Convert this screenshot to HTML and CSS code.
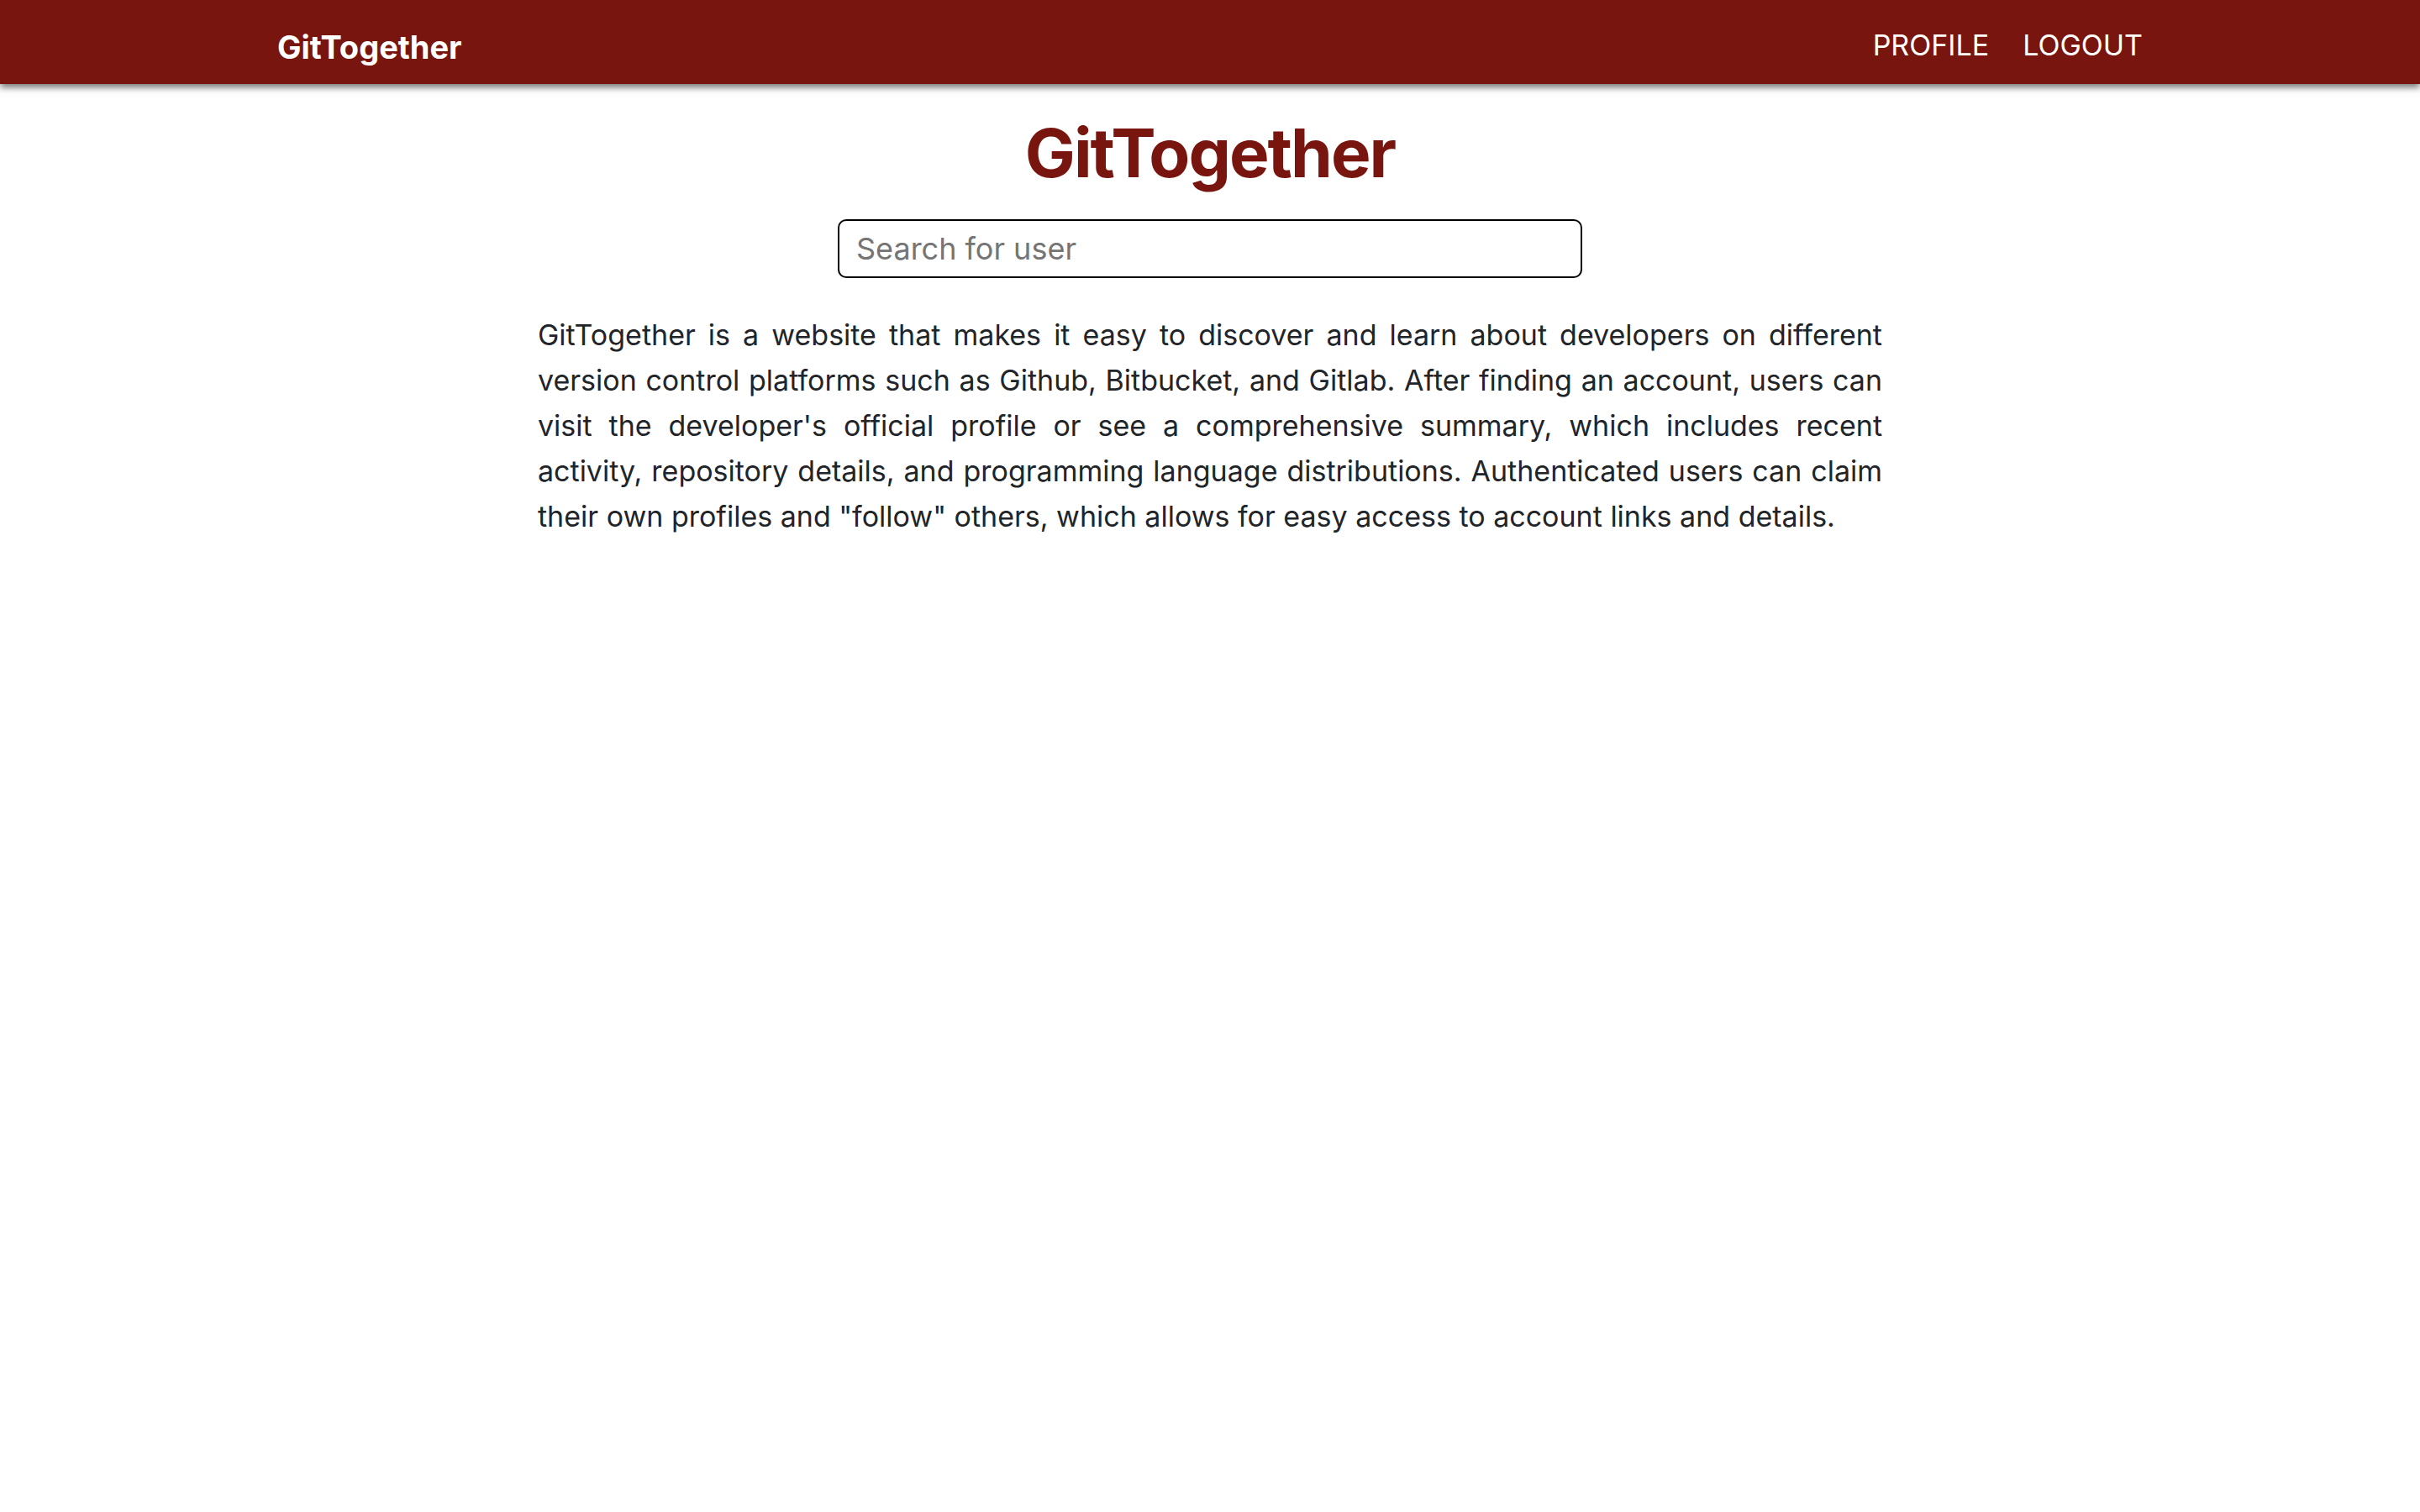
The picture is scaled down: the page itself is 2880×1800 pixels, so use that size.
FILE: index.html
```html
<!DOCTYPE html>
<html lang="en">
<head>
<meta charset="utf-8">
<title>GitTogether</title>
<link rel="stylesheet" href="styles.css">
</head>
<body>
<nav class="navbar">
  <div class="nav-container">
    <a class="brand" href="#">GitTogether</a>
    <div class="nav-links">
      <a class="nav-link" href="#">PROFILE</a>
      <a class="nav-link" href="#">LOGOUT</a>
    </div>
  </div>
</nav>
<main class="main">
  <h1 class="title">GitTogether</h1>
  <input class="search" type="text" placeholder="Search for user">
  <p class="about">GitTogether is a website that makes it easy to discover and learn about developers on different version control platforms such as Github, Bitbucket, and Gitlab. After finding an account, users can visit the developer's official profile or see a comprehensive summary, which includes recent activity, repository details, and programming language distributions. Authenticated users can claim their own profiles and "follow" others, which allows for easy access to account links and details.</p>
</main>
</body>
</html>
```

FILE: styles.css
```css
* { box-sizing: border-box; }

html, body {
  margin: 0;
  padding: 0;
  background: #ffffff;
}

body {
  font-family: Inter, "Noto Sans", "Liberation Sans", sans-serif;
  color: #212529;
}

.navbar {
  background: #79150f;
  height: 100px;
  box-shadow: 0 4px 8px rgba(0, 0, 0, 0.55);
  position: relative;
  z-index: 1;
}

.nav-container {
  width: 2280px;
  height: 100%;
  margin: 0 auto;
  padding: 8px 30px 0;
  display: flex;
  align-items: center;
  justify-content: space-between;
}

.brand {
  color: #ffffff;
  text-decoration: none;
  font-weight: 700;
  font-size: 38px;
  line-height: 1;
  padding-top: 4px;
}

.nav-links {
  display: flex;
  gap: 40px;
}

.nav-link {
  color: #ffffff;
  text-decoration: none;
  font-size: 34px;
  line-height: 1;
  font-weight: 400;
}

.main {
  display: flex;
  flex-direction: column;
  align-items: center;
  padding-top: 34px;
}

.title {
  margin: 0;
  font-size: 80px;
  line-height: 1.2;
  font-weight: 700;
  color: #79150f;
  letter-spacing: -2px;
}

.search {
  margin-top: 31px;
  width: 886px;
  height: 70px;
  border: 2px solid #000000;
  border-radius: 10px;
  padding: 0 20px;
  font-family: Inter, "Noto Sans", sans-serif;
  font-size: 36px;
  color: #212529;
  outline: none;
}

.search::placeholder {
  color: #757575;
}

.about {
  margin: 41px 0 0;
  width: 1600px;
  font-size: 34px;
  line-height: 54px;
  text-align: justify;
  color: #212529;
}
```
